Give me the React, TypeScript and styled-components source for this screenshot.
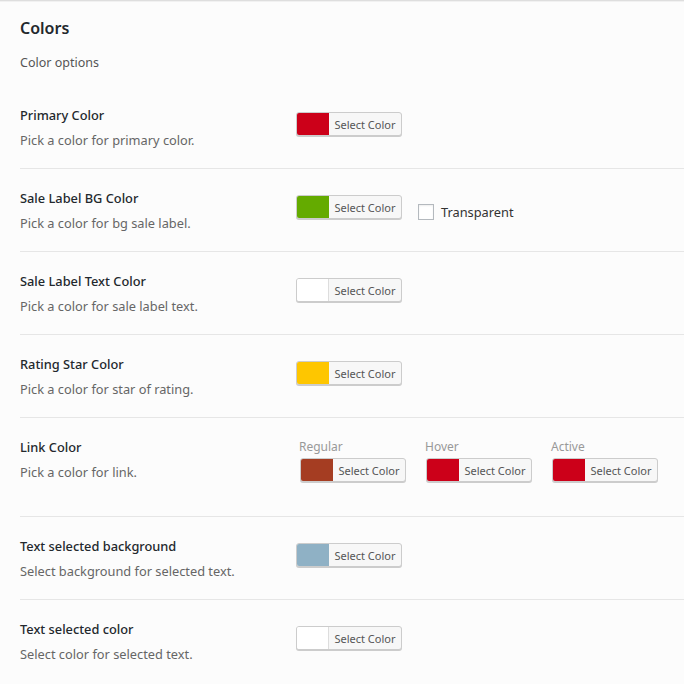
import * as React from 'react';
import styled, { createGlobalStyle } from 'styled-components';

const GlobalStyle = createGlobalStyle`
	html, body {
		margin: 0;
		padding: 0;
		background: #fcfcfc;
	}
	body {
		font-family: "Noto Sans", "Open Sans", "Liberation Sans", sans-serif;
		-webkit-font-smoothing: antialiased;
	}
`;

interface ColorField {
	label?: string;
	color: string;
}

interface OptionRow {
	id: string;
	title: string;
	description: string;
	fields: ColorField[];
	transparent?: boolean;
}

const rows: OptionRow[] = [
	{ id: 'primary', title: 'Primary Color', description: 'Pick a color for primary color.', fields: [{ color: '#cc0019' }] },
	{
		id: 'sale-bg',
		title: 'Sale Label BG Color',
		description: 'Pick a color for bg sale label.',
		fields: [{ color: '#64ab00' }],
		transparent: true
	},
	{ id: 'sale-text', title: 'Sale Label Text Color', description: 'Pick a color for sale label text.', fields: [{ color: '#ffffff' }] },
	{ id: 'rating', title: 'Rating Star Color', description: 'Pick a color for star of rating.', fields: [{ color: '#fec600' }] },
	{
		id: 'link',
		title: 'Link Color',
		description: 'Pick a color for link.',
		fields: [
			{ label: 'Regular', color: '#a53d22' },
			{ label: 'Hover', color: '#cc0019' },
			{ label: 'Active', color: '#cc0019' }
		]
	},
	{ id: 'sel-bg', title: 'Text selected background', description: 'Select background for selected text.', fields: [{ color: '#8fb1c5' }] },
	{ id: 'sel-color', title: 'Text selected color', description: 'Select color for selected text.', fields: [{ color: '#ffffff' }] }
];

const StyledPanel = styled.div`
	width: 684px;
	min-height: 684px;
	border-top: 1px solid #dedede;
	box-shadow: inset 0 1px 0 #f1f1f1;
	background: #fcfcfc;
	box-sizing: border-box;
`;

const StyledHeader = styled.div`
	padding: 16px 20px 0;
`;

const StyledHeading = styled.h2`
	margin: 0;
	font-size: 16px;
	line-height: 22px;
	font-weight: 600;
	color: #23282d;
`;

const StyledSubheading = styled.p`
	margin: 15px 0 0;
	font-size: 12.5px;
	line-height: 18px;
	color: #555;
`;

const StyledTable = styled.div`
	margin-top: 14px;
	padding-left: 20px;
`;

const StyledRow = styled.div<{ $last?: boolean }>`
	display: grid;
	grid-template-columns: 276px 1fr;
	border-bottom: 1px solid ${props => (props.$last ? 'transparent' : '#e6e6e6')};
`;

const StyledLabelCell = styled.div`
	padding: 20px 0 19px;
`;

const StyledTitle = styled.div`
	font-size: 12.8px;
	line-height: 18px;
	font-weight: 500;
	color: #23282d;
`;

const StyledDescription = styled.div`
	margin-top: 7px;
	font-size: 12.8px;
	line-height: 18px;
	color: #666;
`;

const StyledFieldCell = styled.div<{ $grouped?: boolean }>`
	display: flex;
	align-items: flex-start;
	gap: ${props => (props.$grouped ? '20px' : '16px')};
	padding: ${props => (props.$grouped ? '20px 0 34px 4px' : '26px 0 0')};
`;

const StyledGroup = styled.div`
	display: flex;
	flex-direction: column;
	gap: 2px;
`;

const StyledGroupLabel = styled.span`
	font-size: 12px;
	line-height: 18px;
	color: #999;
	margin-left: -1px;
`;

const StyledColorButton = styled.button`
	display: flex;
	align-items: stretch;
	height: 24px;
	width: 106px;
	padding: 0;
	border: 1px solid #cccccc;
	border-radius: 3px;
	box-shadow: 0 1px 0 #cccccc;
	background: #f7f7f7;
	box-sizing: border-box;
	cursor: pointer;
	overflow: hidden;
	font-family: inherit;
`;

const StyledSwatch = styled.span<{ $color: string }>`
	width: 31px;
	flex: none;
	background: ${props => props.$color};
	border-right: 1px solid ${props => (props.$color === '#ffffff' ? '#dddddd' : props.$color)};
`;

const StyledButtonText = styled.span`
	flex: 1;
	display: flex;
	align-items: center;
	justify-content: center;
	font-size: 11px;
	color: #555;
	white-space: nowrap;
`;

const StyledCheckLabel = styled.label`
	display: flex;
	align-items: center;
	gap: 7px;
	margin-top: 8px;
	font-size: 12.8px;
	color: #333;
	cursor: pointer;
`;

const StyledCheckbox = styled.span`
	width: 16px;
	height: 16px;
	box-sizing: border-box;
	border: 1px solid #b4b9be;
	background: #fff;
	box-shadow: inset 0 1px 2px rgba(0, 0, 0, 0.07);
`;

const ColorButton: React.FC<{ color: string }> = ({ color }) => (
	<StyledColorButton type="button">
		<StyledSwatch $color={color} />
		<StyledButtonText>Select Color</StyledButtonText>
	</StyledColorButton>
);

const App: React.FC = () => (
	<>
		<GlobalStyle />
		<StyledPanel>
			<StyledHeader>
				<StyledHeading>Colors</StyledHeading>
				<StyledSubheading>Color options</StyledSubheading>
			</StyledHeader>
			<StyledTable>
				{rows.map((row, index) => {
					const grouped = row.fields.some(field => field.label);
					return (
						<StyledRow key={row.id} $last={index === rows.length - 1}>
							<StyledLabelCell>
								<StyledTitle>{row.title}</StyledTitle>
								<StyledDescription>{row.description}</StyledDescription>
							</StyledLabelCell>
							<StyledFieldCell $grouped={grouped}>
								{row.fields.map((field, i) =>
									field.label ? (
										<StyledGroup key={i}>
											<StyledGroupLabel>{field.label}</StyledGroupLabel>
											<ColorButton color={field.color} />
										</StyledGroup>
									) : (
										<ColorButton key={i} color={field.color} />
									)
								)}
								{row.transparent && (
									<StyledCheckLabel>
										<StyledCheckbox />
										Transparent
									</StyledCheckLabel>
								)}
							</StyledFieldCell>
						</StyledRow>
					);
				})}
			</StyledTable>
		</StyledPanel>
	</>
);

export default App;
